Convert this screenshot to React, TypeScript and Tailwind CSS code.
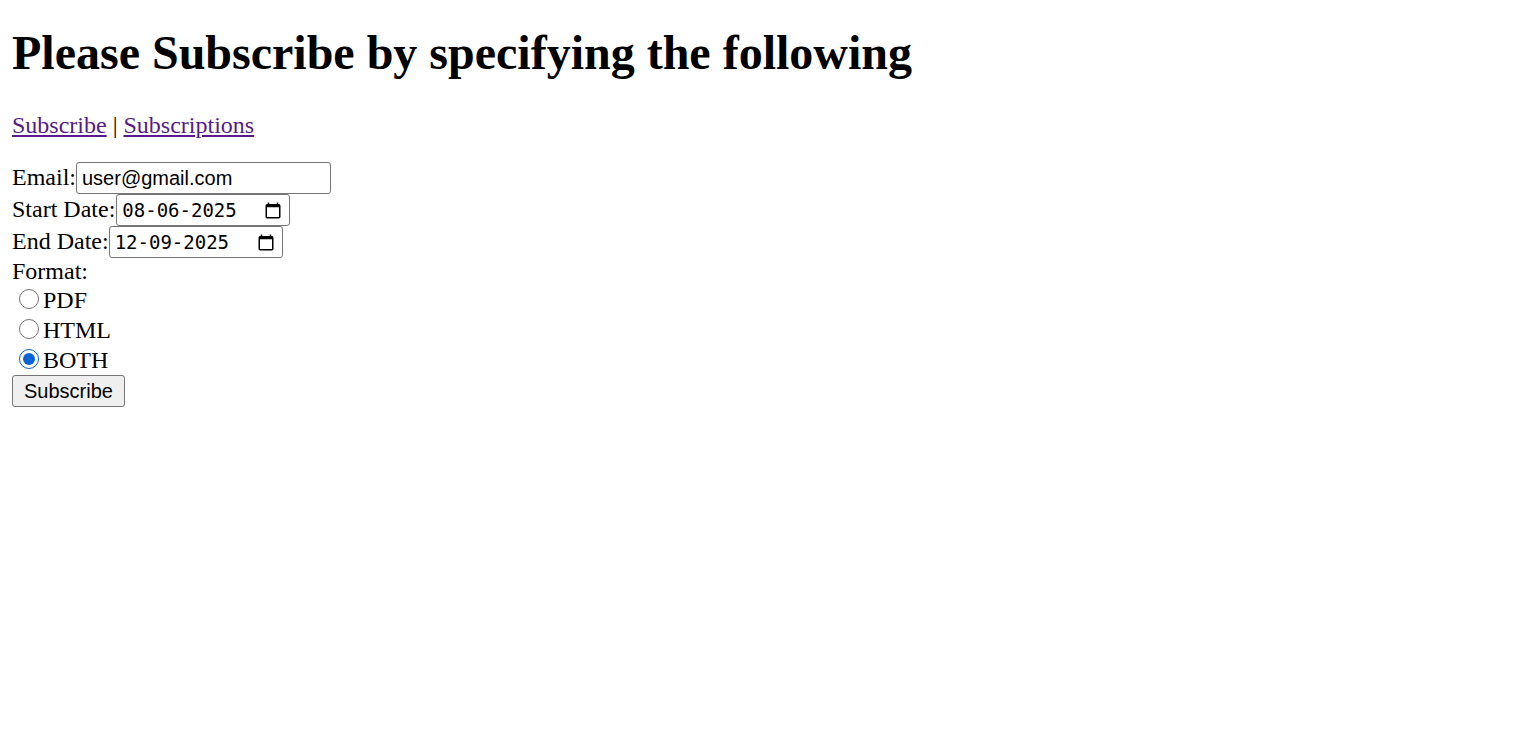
import { useState } from 'react';

function CalendarIcon() {
  return (
    <svg width="16" height="18" viewBox="0 0 16 18" fill="none" className="shrink-0">
      <rect x="1.25" y="3.75" width="13.5" height="13" rx="1" stroke="#000" strokeWidth="1.5" />
      <rect x="1.25" y="3.75" width="13.5" height="2.5" fill="#000" />
      <path d="M3.5 1.5v3M12.5 1.5v3" stroke="#000" strokeWidth="1.5" />
    </svg>
  );
}

function DateBox({ value }: { value: string }) {
  return (
    <div className="inline-flex items-center justify-between w-[174px] h-[32px] pl-[5px] pr-[8px] border border-[#767676] rounded-[3px] bg-white">
      <span className="font-['DejaVu_Sans_Mono',monospace] text-[19px] leading-none">{value}</span>
      <CalendarIcon />
    </div>
  );
}

export default function App() {
  const [format, setFormat] = useState('BOTH');
  const [email, setEmail] = useState('user@gmail.com');

  const formats = ['PDF', 'HTML', 'BOTH'];

  return (
    <div className="min-h-screen bg-white text-black px-[12px] font-['Liberation_Serif',serif] text-[24px]">
      <h1 className="pt-[25px] text-[48px] font-bold leading-[55px] whitespace-nowrap">
        Please Subscribe by specifying the following
      </h1>

      <p className="mt-[31px] leading-[28px]">
        <a href="#" className="text-[#551a8b] underline">Subscribe</a> |{' '}
        <a href="#" className="text-[#551a8b] underline">Subscriptions</a>
      </p>

      <form className="mt-[23px]" onSubmit={e => e.preventDefault()}>
        <div className="flex items-baseline h-[32px] leading-[28px]">
          <span>Email:</span>
          <input
            type="text"
            value={email}
            onChange={e => setEmail(e.target.value)}
            className="w-[255px] h-[32px] px-[5px] border border-[#767676] rounded-[3px] font-['Liberation_Sans',sans-serif] text-[20px] text-black outline-none"
          />
        </div>
        <div className="flex items-baseline h-[32px] leading-[28px]">
          <span className="mt-[1px]">Start Date:</span>
          <span className="self-start ml-[1px]"><DateBox value="08-06-2025" /></span>
        </div>
        <div className="flex items-baseline h-[32px] leading-[28px]">
          <span className="mt-[1px]">End Date:</span>
          <span className="self-start"><DateBox value="12-09-2025" /></span>
        </div>
        <div className="leading-[27px]">Format:</div>

        {formats.map(f => (
          <label key={f} className="flex items-start h-[30px] cursor-pointer">
            <input
              type="radio"
              name="format"
              checked={format === f}
              onChange={() => setFormat(f)}
              className="mt-[3.5px] ml-[7px] mr-[4px] w-[20px] h-[20px] accent-[#0b64d6]"
            />
            <span className="mt-[1px] leading-[28px]">{f}</span>
          </label>
        ))}

        <button
          type="submit"
          className="block h-[32px] px-[11px] border border-[#767676] rounded-[3px] bg-[#efefef] font-['Liberation_Sans',sans-serif] text-[20px] leading-none text-black"
        >
          Subscribe
        </button>
      </form>
    </div>
  );
}
